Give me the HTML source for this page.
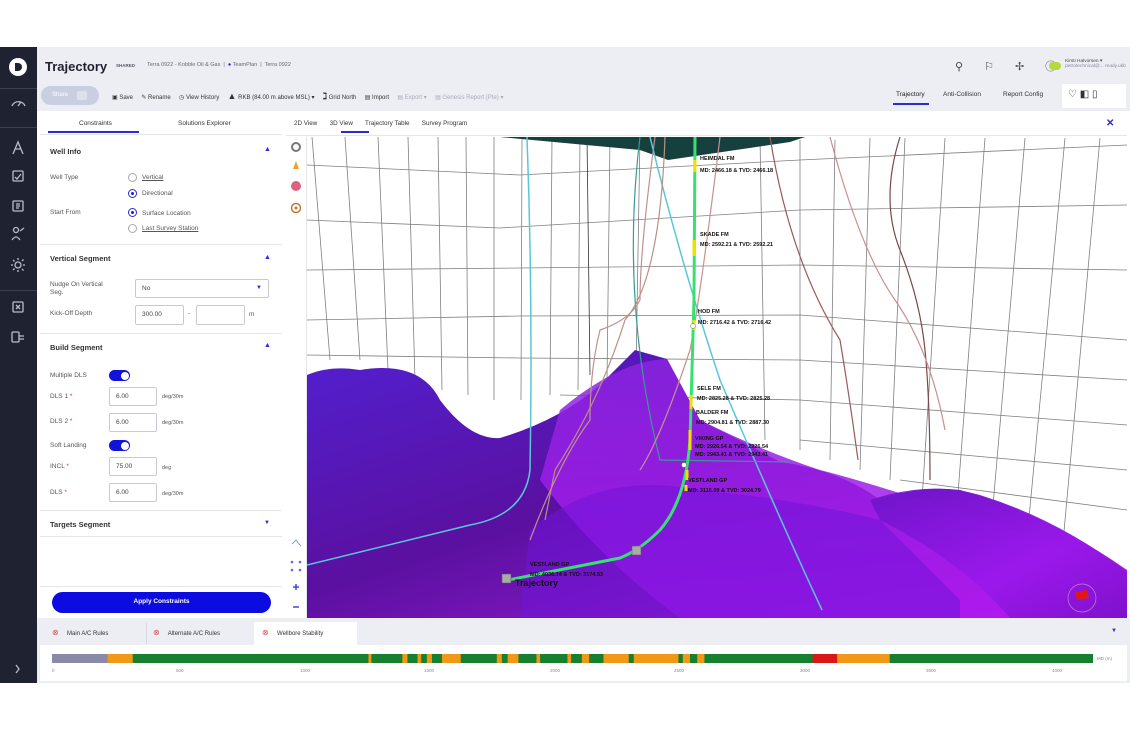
<!DOCTYPE html>
<html><head><meta charset="utf-8"><style>
*{box-sizing:border-box;margin:0;padding:0}
body{width:1130px;height:730px;background:#fff;font-family:"Liberation Sans",sans-serif;position:relative;overflow:hidden;color:#333}
.a{position:absolute}
.t{font-size:6.5px;color:#555;white-space:nowrap}
.b{font-size:7.5px;font-weight:bold;color:#333;white-space:nowrap}
.inp{position:absolute;border:1px solid #c8cad0;background:#fff;font-size:6.5px;padding:5px 6px;color:#444;border-radius:2px}
.rad{position:absolute;width:9px;height:9px;border:1px solid #aaa;border-radius:50%;background:#fff}
.rad.on{border-color:#2a2ad6}
.rad.on:after{content:"";position:absolute;left:2px;top:2px;width:3px;height:3px;border-radius:50%;background:#1a1ae0}
.tog{position:absolute;width:21px;height:11px;border-radius:6px;background:#1212d8}
.tog:after{content:"";position:absolute;right:1.5px;top:1.5px;width:8px;height:8px;border-radius:50%;background:#fff}
.car{position:absolute;font-size:7px;color:#2a2ad6}
.sep{position:absolute;left:40px;width:242px;height:1px;background:#e4e6ea}
.req{color:#e03030}
</style></head><body>
<div class="a" style="left:0;top:47px;width:37px;height:636px;background:#1f2231"></div>
<div class="a" style="left:9px;top:58px;width:18px;height:18px;border-radius:50%;background:#fff"></div>
<div class="a" style="left:15px;top:63px;width:7px;height:8px;border-radius:0 4px 4px 0;background:#1f2231"></div>
<div class="a" style="left:0;top:88px;width:37px;height:1px;background:#3a3e50"></div>
<div class="a" style="left:0;top:127px;width:37px;height:1px;background:#3a3e50"></div>
<div class="a" style="left:0;top:290px;width:37px;height:1px;background:#3a3e50"></div>
<svg class="a" style="left:0;top:47px" width="37" height="636" fill="none" stroke="#b8bccb" stroke-width="1.3">
<path d="M12 59 A7 7 0 0 1 25 59"/><path d="M18 59 L21 55"/>
<path d="M13 107 L18 95 L23 107 M15 102 L21 102"/>
<rect x="13" y="124" width="10" height="10" rx="1"/><path d="M15 130 l2 2 l4 -5"/>
<rect x="13" y="154" width="10" height="10" rx="1"/><path d="M16 157 h4 M16 159 h4 M16 161 h3"/>
<circle cx="16" cy="183" r="2.5"/><path d="M12 193 q4 -6 8 0 M20 184 l4 -3"/>
<circle cx="18" cy="218" r="3"/><path d="M18 211 v2 M18 223 v2 M11 218 h2 M23 218 h2 M13 213 l1.5 1.5 M22 222 l1.5 1.5 M13 223 l1.5 -1.5 M22 214 l1.5 -1.5"/>
<rect x="13" y="255" width="10" height="10" rx="1"/><path d="M16 258 l4 4 M20 258 l-4 4"/>
<rect x="12" y="285" width="7" height="10" rx="1"/><path d="M19 289 h5 M19 292 h5"/>
<path d="M16 618 l3 4 l-3 4"/>
</svg>
<div class="a" style="left:37px;top:47px;width:1093px;height:64px;background:#eceef3"></div>
<div class="a" style="left:45px;top:59px;font-size:13px;font-weight:bold;color:#1e2030">Trajectory</div>
<div class="a t" style="left:116px;top:63px;font-size:4.5px;font-weight:bold;color:#556">SHARED</div>
<div class="a t" style="left:147px;top:62px;font-size:5.5px;color:#667">Terra 0922 - Kobble Oil &amp; Gas &nbsp;|&nbsp; <span style="color:#1a1ae0">●</span> TeamPlan &nbsp;|&nbsp; Terra 0922</div>
<div class="a" style="left:41px;top:86px;width:58px;height:19px;border-radius:10px;background:#c9cfe0"></div>
<div class="a t" style="left:52px;top:92px;color:#fff;font-size:6px">Share</div>
<div class="a" style="left:77px;top:91px;width:10px;height:9px;background:#dde1ec;border-radius:2px"></div>
<div class="a t" style="left:112px;top:91px;font-size:6px;color:#333">▣ Save &nbsp;&nbsp;&nbsp; ✎ Rename &nbsp;&nbsp;&nbsp; ◷ View History &nbsp;&nbsp;&nbsp; <b style="font-size:9px">▲</b> RKB (84.00 m above MSL) ▾ &nbsp;&nbsp;&nbsp; <b style="font-size:9px">ℷ</b> Grid North &nbsp;&nbsp;&nbsp; ▤ Import &nbsp;&nbsp;&nbsp; <span style="color:#aab">▤ Export ▾ &nbsp;&nbsp;&nbsp; ▤ Genesis Report (Pte) ▾</span></div>
<div class="a t" style="left:896px;top:91px;font-size:6.5px;color:#222">Trajectory</div>
<div class="a" style="left:893px;top:103px;width:36px;height:2px;background:#2a2ad6"></div>
<div class="a t" style="left:943px;top:91px;font-size:6.5px;color:#333">Anti-Collision</div>
<div class="a t" style="left:1003px;top:91px;font-size:6.5px;color:#333">Report Config</div>
<div class="a" style="left:1062px;top:84px;width:64px;height:24px;background:#fff"></div>
<div class="a t" style="left:1068px;top:89px;font-size:10px;color:#333">♡ ◧ ▯</div>
<div class="a t" style="left:955px;top:58px;font-size:11px;color:#444;letter-spacing:9px">⚲ ⚐ ✢ ⓘ</div>
<div class="a" style="left:1049px;top:62px;width:12px;height:8px;border-radius:4px;background:#b8d840"></div>
<div class="a t" style="left:1065px;top:59px;font-size:4.8px;color:#445">Kirsti Halvorsen ▾<br><span style="color:#889">petrotechnical@... ready.ukb</span></div>
<div class="a" style="left:40px;top:111px;width:242px;height:506px;background:#fff"></div>
<div class="a t" style="left:79px;top:120px;font-size:6.5px;color:#333">Constraints</div>
<div class="a t" style="left:178px;top:120px;font-size:6.5px;color:#333">Solutions Explorer</div>
<div class="a" style="left:48px;top:131px;width:91px;height:2px;background:#2a2ad6"></div>
<div class="sep" style="top:134px"></div>
<div class="a b" style="left:50px;top:147px">Well Info</div><div class="car" style="left:264px;top:146px">▲</div>
<div class="a t" style="left:50px;top:174px">Well Type</div>
<div class="rad" style="left:128px;top:173px"></div><div class="a t" style="left:142px;top:174px;text-decoration:underline">Vertical</div>
<div class="rad on" style="left:128px;top:189px"></div><div class="a t" style="left:142px;top:190px">Directional</div>
<div class="a t" style="left:50px;top:209px">Start From</div>
<div class="rad on" style="left:128px;top:208px"></div><div class="a t" style="left:142px;top:210px">Surface Location</div>
<div class="rad" style="left:128px;top:224px"></div><div class="a t" style="left:142px;top:225px;text-decoration:underline">Last Survey Station</div>
<div class="sep" style="top:244px"></div>
<div class="a b" style="left:50px;top:254px">Vertical Segment</div><div class="car" style="left:264px;top:254px">▲</div>
<div class="a t" style="left:50px;top:281px;line-height:8px">Nudge On Vertical<br>Seg.</div>
<div class="inp" style="left:135px;top:279px;width:134px;height:19px">No</div><div class="car" style="left:256px;top:285px;font-size:6px">▼</div>
<div class="a t" style="left:50px;top:310px">Kick-Off Depth</div>
<div class="inp" style="left:135px;top:305px;width:49px;height:20px">300.00</div>
<div class="a t" style="left:188px;top:310px">-</div>
<div class="inp" style="left:196px;top:305px;width:49px;height:20px"></div>
<div class="a t" style="left:249px;top:311px">m</div>
<div class="sep" style="top:333px"></div>
<div class="a b" style="left:50px;top:343px">Build Segment</div><div class="car" style="left:264px;top:342px">▲</div>
<div class="a t" style="left:50px;top:372px">Multiple DLS</div><div class="tog" style="left:109px;top:370px"></div>
<div class="a t" style="left:50px;top:393px">DLS 1 <span class="req">*</span></div>
<div class="inp" style="left:109px;top:387px;width:48px;height:19px">6.00</div><div class="a t" style="left:162px;top:394px;font-size:5.5px">deg/30m</div>
<div class="a t" style="left:50px;top:418px">DLS 2 <span class="req">*</span></div>
<div class="inp" style="left:109px;top:413px;width:48px;height:19px">6.00</div><div class="a t" style="left:162px;top:420px;font-size:5.5px">deg/30m</div>
<div class="a t" style="left:50px;top:442px">Soft Landing</div><div class="tog" style="left:109px;top:440px"></div>
<div class="a t" style="left:50px;top:463px">INCL <span class="req">*</span></div>
<div class="inp" style="left:109px;top:457px;width:48px;height:19px">75.00</div><div class="a t" style="left:162px;top:465px;font-size:5.5px">deg</div>
<div class="a t" style="left:50px;top:489px">DLS <span class="req">*</span></div>
<div class="inp" style="left:109px;top:483px;width:48px;height:19px">6.00</div><div class="a t" style="left:162px;top:491px;font-size:5.5px">deg/30m</div>
<div class="sep" style="top:510px"></div>
<div class="a b" style="left:50px;top:520px">Targets Segment</div><div class="car" style="left:264px;top:520px;font-size:6px">▼</div>
<div class="sep" style="top:536px"></div>
<div class="sep" style="top:586px"></div>
<div class="a" style="left:52px;top:592px;width:219px;height:21px;border-radius:11px;background:#0c0ce0"></div>
<div class="a t" style="left:52px;top:598px;width:219px;text-align:center;color:#fff;font-weight:bold;font-size:6.5px">Apply Constraints</div>
<div class="a" style="left:286px;top:111px;width:841px;height:507px;background:#fff"></div>
<div class="a t" style="left:294px;top:120px;font-size:6.3px;color:#333">2D View &nbsp;&nbsp;&nbsp;&nbsp;&nbsp; 3D View &nbsp;&nbsp;&nbsp;&nbsp;&nbsp; Trajectory Table &nbsp;&nbsp;&nbsp;&nbsp;&nbsp; Survey Program</div>
<div class="a" style="left:341px;top:131px;width:28px;height:2px;background:#2a2ad6"></div>
<div class="a" style="left:1106px;top:118px;font-size:10px;color:#2a2ad6;font-weight:bold">✕</div>
<div class="a" style="left:286px;top:135px;width:841px;height:1px;background:#e4e6ea"></div>
<div class="a" style="left:306px;top:136px;width:1px;height:482px;background:#e4e6ea"></div>
<svg class="a" style="left:286px;top:136px" width="21" height="482">
<circle cx="10" cy="11" r="4" fill="none" stroke="#777" stroke-width="2"/>
<path d="M10 25 l3 8 h-6 z" fill="#f0a030"/>
<circle cx="10" cy="50" r="5" fill="#e06080"/>
<circle cx="10" cy="72" r="4.5" fill="none" stroke="#c07830" stroke-width="1.5"/><circle cx="10" cy="72" r="1.5" fill="#c07830"/>
<path d="M6 408 l4 -4 l3 4 l2 2" stroke="#8a9ae0" fill="none"/>
<g fill="#5a6ae0"><circle cx="6" cy="426" r="1.3"/><circle cx="14" cy="426" r="1.3"/><circle cx="6" cy="434" r="1.3"/><circle cx="14" cy="434" r="1.3"/></g>
<path d="M10 448 v6 M7 451 h6" stroke="#3a4ae0" stroke-width="1.5"/>
<path d="M7 471 h6" stroke="#3a4ae0" stroke-width="1.5"/>
</svg>
<svg class="a" style="left:307px;top:137px" width="820" height="481" viewBox="307 137 820 481">
<defs>
<linearGradient id="g1" x1="0" y1="0" x2="1" y2="1"><stop offset="0" stop-color="#5220d0"/><stop offset=".45" stop-color="#5a10a0"/><stop offset="1" stop-color="#b020e8"/></linearGradient>
<linearGradient id="g2" x1="0" y1="0" x2="0" y2="1"><stop offset="0" stop-color="#8a24e0"/><stop offset="1" stop-color="#b018f0"/></linearGradient>
<linearGradient id="g3" x1="0" y1="0" x2="1" y2="1"><stop offset="0" stop-color="#6a14c8"/><stop offset=".6" stop-color="#9a18ec"/><stop offset="1" stop-color="#7a10c8"/></linearGradient>
</defs>
<g stroke="#555" stroke-width=".8" fill="none" opacity=".75">
<path d="M312 137 L330 360 M345 137 L360 360 M378 137 L388 370 M408 137 L415 380 M438 137 L442 390 M466 137 L468 395 M494 137 L494 400 M522 137 L521 400 M552 137 L550 395 M580 137 L578 390 M610 137 L607 380 M640 137 L636 370"/>
<path d="M760 137 L765 440 M800 140 L800 450 M835 140 L830 460 M870 138 L860 470 M905 138 L890 480 M945 138 L922 500 M985 138 L956 520 M1025 138 L990 540 M1065 138 L1025 560 M1100 138 L1060 575"/>
<path d="M307 165 L520 175 L800 160 L1127 145 M307 220 L500 228 L800 210 L1127 205 M307 270 L520 268 L800 265 L1127 270 M307 320 L520 316 L800 315 L1127 340 M307 355 L520 358 L800 360 L1127 380 M560 395 L800 400 L1127 425 M800 440 L1127 470 M900 480 L1127 510"/>
</g>
<path d="M500 137 L805 137 L790 142 L668 160 L640 150 Z" fill="#16403e"/>
<path d="M307 375 Q330 365 360 370 Q420 360 440 400 Q470 440 500 438 Q560 420 600 385 L635 350 L667 359 L700 420 Q740 440 780 462 Q840 470 880 500 Q920 485 960 490 Q1040 510 1127 570 L1127 618 L307 618 Z" fill="url(#g1)"/>
<path d="M560 410 Q620 360 667 359 L700 420 Q760 450 820 470 Q900 490 1127 570 L1127 618 L680 618 Q600 560 540 480 Z" fill="url(#g2)" opacity=".85"/>
<path d="M870 500 Q930 480 980 495 Q1060 520 1127 572 L1127 618 L1010 618 Q960 560 880 520 Z" fill="url(#g3)" opacity=".9"/>
<path d="M530 530 Q600 470 700 490 Q800 500 880 520 L960 600 L960 618 L520 618 Z" fill="#7014d8" opacity=".55"/>
<g fill="none" stroke-width="1.2">
<path d="M527 137 Q533 300 530 470 Q525 515 470 525 L307 565" stroke="#58c8d8" stroke-width="1.5"/>
<path d="M650 137 Q680 260 720 380 Q780 520 822 610" stroke="#58c8d8" stroke-width="1.5"/>
<path d="M640 137 Q620 300 660 460 L790 462" stroke="#3a9898"/>
<path d="M655 137 Q640 250 640 300 Q630 320 600 330 Q590 370 590 420 Q560 460 530 540" stroke="#c09090"/>
<path d="M665 137 Q660 280 625 320 Q600 400 555 470 L545 520" stroke="#b89080"/>
<path d="M720 137 Q700 300 690 350 Q660 440 640 470" stroke="#c89090"/>
<path d="M770 137 Q790 260 840 340 Q850 400 858 460" stroke="#9a5a5a"/>
<path d="M900 137 Q880 200 900 250 Q920 300 925 350 Q930 400 930 480" stroke="#7a4848"/>
<path d="M830 137 Q860 250 895 300 Q930 350 945 430" stroke="#c89090"/>
<path d="M587 137 L590 375" stroke="#333" stroke-width=".8"/>
</g>
<path d="M695 137 L694 300 L690 440 Q686 500 660 530 Q640 550 620 558 L508 580" fill="none" stroke="#38e070" stroke-width="3"/>
<g stroke="#f0e000" stroke-width="3"><path d="M695 160 v12 M694 240 v16 M694 320 v10 M691 395 v14 M690 430 v20 M687 470 v10 M686 485 v6"/></g>
<circle cx="693" cy="326" r="2.5" fill="#fff" stroke="#666" stroke-width=".5"/>
<circle cx="684" cy="465" r="2.5" fill="#fff" stroke="#666" stroke-width=".5"/>
<rect x="632" y="546" width="9" height="9" fill="#aaa" stroke="#555" stroke-width=".5"/>
<rect x="502" y="574" width="9" height="9" fill="#aaa" stroke="#555" stroke-width=".5"/>
<g font-family="Liberation Sans" font-size="5.5" font-weight="bold" fill="#111">
<text x="700" y="160">HEIMDAL FM</text><text x="700" y="172">MD: 2466.18 &amp; TVD: 2466.18</text>
<text x="700" y="236">SKADE FM</text><text x="700" y="246">MD: 2592.21 &amp; TVD: 2592.21</text>
<text x="698" y="313">HOD FM</text><text x="698" y="324">MD: 2716.42 &amp; TVD: 2716.42</text>
<text x="697" y="390">SELE FM</text><text x="697" y="400">MD: 2825.28 &amp; TVD: 2825.28</text>
<text x="696" y="414">BALDER FM</text><text x="696" y="424">MD: 2904.81 &amp; TVD: 2887.30</text>
<text x="695" y="440">VIKING GP</text><text x="695" y="448">MD: 2926.54 &amp; TVD: 2926.54</text><text x="695" y="456">MD: 2943.41 &amp; TVD: 2943.41</text>
<text x="688" y="482">VESTLAND GP</text><text x="688" y="492">MD: 3116.09 &amp; TVD: 3024.79</text>
<text x="530" y="566">VESTLAND GP</text><text x="530" y="576">MD: 4036.14 &amp; TVD: 3174.53</text>
<text x="515" y="586" font-size="9">Trajectory</text>
</g>
<circle cx="1082" cy="598" r="14" fill="none" stroke="#c080d8" stroke-width=".7"/>
<path d="M1075 592 l12 -2 l2 8 l-12 2 z" fill="#e01818"/>
</svg>
<div class="a" style="left:37px;top:618px;width:1093px;height:65px;background:#eceef3"></div>
<div class="a" style="left:254px;top:622px;width:103px;height:23px;background:#fff"></div>
<div class="a" style="left:146px;top:623px;width:1px;height:21px;background:#d8dae0"></div>
<div class="a t" style="left:52px;top:628px;font-size:6px;color:#333"><span style="color:#e05050;font-size:8px">⊗</span> &nbsp;&nbsp;&nbsp; Main A/C Rules</div>
<div class="a t" style="left:153px;top:628px;font-size:6px;color:#333"><span style="color:#e05050;font-size:8px">⊗</span> &nbsp;&nbsp;&nbsp; Alternate A/C Rules</div>
<div class="a t" style="left:262px;top:628px;font-size:6px;color:#333"><span style="color:#e05050;font-size:8px">⊗</span> &nbsp;&nbsp;&nbsp; Wellbore Stability</div>
<div class="car" style="left:1111px;top:628px;font-size:6px">▼</div>
<div class="a" style="left:40px;top:645px;width:1087px;height:36px;background:#fff"></div>
<svg class="a" style="left:52px;top:654px" width="1041" height="9" viewBox="73 0 1444 10" preserveAspectRatio="none">
<rect x="73" y="0" width="1444" height="10" fill="#178030"/>
<g fill="#f09818">
<rect x="150" width="35" height="10"/><rect x="512" width="4" height="10"/><rect x="559" width="7" height="10"/><rect x="580" width="5" height="10"/><rect x="593" width="7" height="10"/><rect x="614" width="26" height="10"/><rect x="690" width="7" height="10"/><rect x="705" width="15" height="10"/><rect x="745" width="5" height="10"/><rect x="788" width="5" height="10"/><rect x="808" width="10" height="10"/><rect x="838" width="35" height="10"/><rect x="880" width="62" height="10"/><rect x="948" width="10" height="10"/><rect x="968" width="10" height="10"/><rect x="1162" width="73" height="10"/></g>
<rect x="73" width="77" height="10" fill="#8a8aa8"/>
<rect x="1128" width="34" height="10" fill="#d81818"/>
</svg>
<div class="a t" style="left:1097px;top:656px;font-size:4.5px;color:#889">MD (m)</div>
<div class="a" style="left:0;top:668px;width:1130px;font-size:4.5px;color:#889">
<span class="a" style="left:52px">0</span><span class="a" style="left:176px">500</span><span class="a" style="left:300px">1000</span><span class="a" style="left:424px">1500</span><span class="a" style="left:550px">2000</span><span class="a" style="left:674px">2500</span><span class="a" style="left:800px">3000</span><span class="a" style="left:926px">3500</span><span class="a" style="left:1052px">4000</span></div>
</body></html>
